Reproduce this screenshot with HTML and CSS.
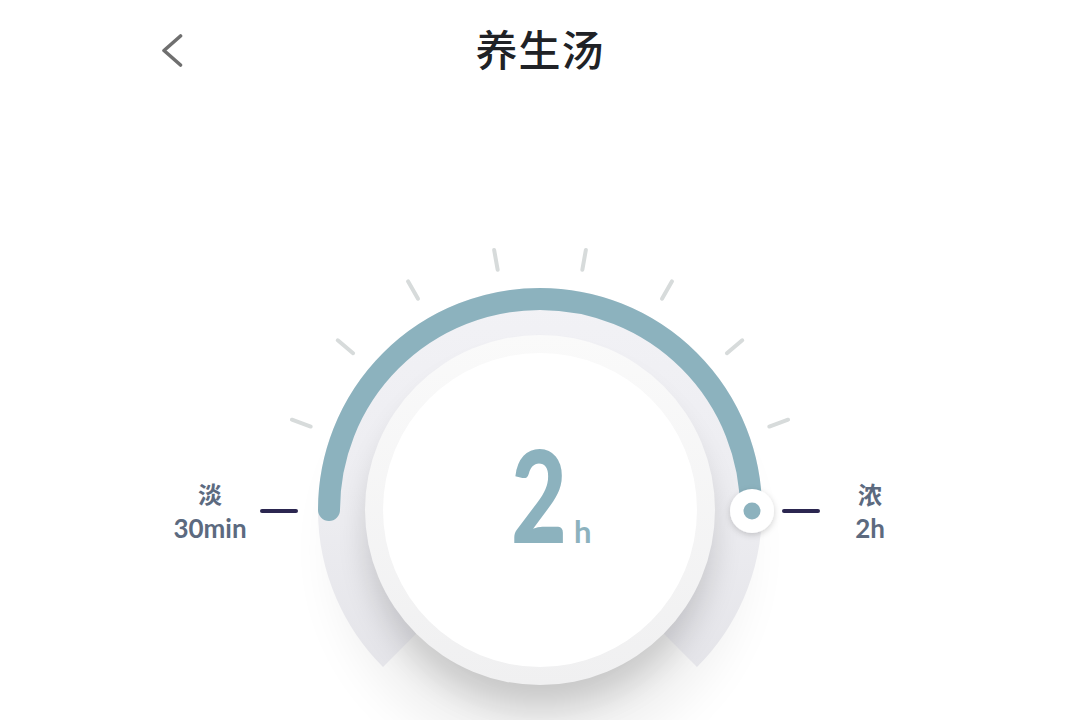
FILE: index.html
```html
<!DOCTYPE html>
<html lang="zh-CN">
<head>
<meta charset="utf-8">
<title>养生汤</title>
<link rel="stylesheet" href="styles.css">
</head>
<body>
<div class="page">
  <header class="header">
    <button class="back" aria-label="返回">
      <svg width="40" height="40" viewBox="0 0 40 40">
        <path d="M28.5 9 L12 23.5 L28.5 38" fill="none" stroke="#6f6f6f" stroke-width="3.6" stroke-linecap="round" stroke-linejoin="round"/>
      </svg>
    </button>
    <h1 class="title">养生汤</h1>
    <span class="spacer"></span>
  </header>

  <main class="stage">
    <div class="label">
      <span class="label-name">淡</span>
      <span class="label-value">30min</span>
    </div>

    <svg class="dial" width="560" height="490" viewBox="0 0 560 490">
      <defs>
        <filter id="softShadow" x="-50%" y="-50%" width="200%" height="200%">
          <feGaussianBlur stdDeviation="24"/>
        </filter>
        <filter id="discShadow" x="-50%" y="-50%" width="200%" height="200%">
          <feGaussianBlur stdDeviation="16"/>
        </filter>
        <filter id="knobShadow" x="-50%" y="-50%" width="200%" height="200%">
          <feDropShadow dx="0" dy="2" stdDeviation="3" flood-color="#000" flood-opacity="0.18"/>
        </filter>
        <linearGradient id="ringGrad" gradientUnits="userSpaceOnUse" x1="0" y1="60" x2="0" y2="480">
          <stop offset="0" stop-color="#f2f2f6"/>
          <stop offset="0.55" stop-color="#ececf0"/>
          <stop offset="1" stop-color="#e2e2e7"/>
        </linearGradient>
        <linearGradient id="discGrad" x1="0" y1="0" x2="0" y2="1">
          <stop offset="0" stop-color="#fafafa"/>
          <stop offset="1" stop-color="#f0f0f1"/>
        </linearGradient>
      </defs>

      <circle cx="280" cy="320" r="205" fill="#000" opacity="0.06" filter="url(#softShadow)"/>

      <path d="M140.35 419.65 A197.5 197.5 0 1 1 419.65 419.65" fill="none" stroke="url(#ringGrad)" stroke-width="49"/>

      <path d="M69 280 A211 211 0 0 1 491 280" fill="none" stroke="#8cb2be" stroke-width="22" stroke-linecap="round"/>

      <g stroke="#d7dbdb" stroke-width="4" stroke-linecap="round">
        <line x1="280" y1="16" x2="280" y2="36" transform="rotate(-70 280 280)"/>
        <line x1="280" y1="16" x2="280" y2="36" transform="rotate(-50 280 280)"/>
        <line x1="280" y1="16" x2="280" y2="36" transform="rotate(-30 280 280)"/>
        <line x1="280" y1="16" x2="280" y2="36" transform="rotate(-10 280 280)"/>
        <line x1="280" y1="16" x2="280" y2="36" transform="rotate(10 280 280)"/>
        <line x1="280" y1="16" x2="280" y2="36" transform="rotate(30 280 280)"/>
        <line x1="280" y1="16" x2="280" y2="36" transform="rotate(50 280 280)"/>
        <line x1="280" y1="16" x2="280" y2="36" transform="rotate(70 280 280)"/>
      </g>

      <circle cx="280" cy="305" r="172" fill="#000" opacity="0.16" filter="url(#discShadow)"/>
      <circle cx="280" cy="280" r="175" fill="url(#discGrad)"/>
      <circle cx="280" cy="280" r="157" fill="#ffffff"/>

      <g stroke="#2b2650" stroke-width="4" stroke-linecap="round">
        <line x1="2" y1="281" x2="36" y2="281"/>
        <line x1="524" y1="281" x2="558" y2="281"/>
      </g>

      <circle cx="492" cy="281" r="22" fill="#ffffff" filter="url(#knobShadow)"/>
      <circle cx="492" cy="281" r="8.5" fill="#8cb2be"/>

      <text class="value" x="251" y="313"><tspan class="big" textLength="56" lengthAdjust="spacingAndGlyphs">2</tspan><tspan class="unit" x="314">h</tspan></text>
    </svg>

    <div class="label">
      <span class="label-name">浓</span>
      <span class="label-value">2h</span>
    </div>
  </main>
</div>
</body>
</html>
```

FILE: styles.css
```css
html, body {
  margin: 0;
  padding: 0;
  background: #ffffff;
  overflow: hidden;
}

.page {
  width: 1080px;
  height: 720px;
  overflow: hidden;
  font-family: Lato, "Noto Sans CJK SC", sans-serif;
}

.header {
  height: 94px;
  display: flex;
  align-items: center;
  padding: 0 150px;
  box-sizing: border-box;
}

.back {
  width: 40px;
  height: 40px;
  padding: 0;
  border: none;
  background: none;
  display: flex;
  margin-left: 2px;
  margin-right: -2px;
}

.spacer {
  width: 40px;
}

.title {
  flex: 1;
  margin: 0;
  text-align: center;
  font-family: "Noto Sans CJK SC", sans-serif;
  font-size: 42px;
  font-weight: 500;
  color: #202226;
  letter-spacing: 1px;
}

.stage {
  margin-top: 136px;
  display: flex;
  justify-content: center;
  align-items: flex-start;
}

.dial {
  display: block;
  flex: none;
}

.label {
  width: 100px;
  display: flex;
  flex-direction: column;
  align-items: center;
  color: #5c6a7f;
  margin-top: 246px;
}

.label-name {
  font-family: "Noto Sans CJK SC", sans-serif;
  font-size: 24px;
  font-weight: 700;
  line-height: 35px;
}

.label-value {
  font-family: Lato, "Noto Sans CJK SC", sans-serif;
  font-size: 26px;
  font-weight: 700;
  line-height: 34px;
}

.value {
  font-family: Lato, sans-serif;
  fill: #8cb2be;
}

.big {
  font-size: 127px;
  font-weight: 900;
}

.unit {
  font-size: 31px;
  font-weight: 700;
}
```
